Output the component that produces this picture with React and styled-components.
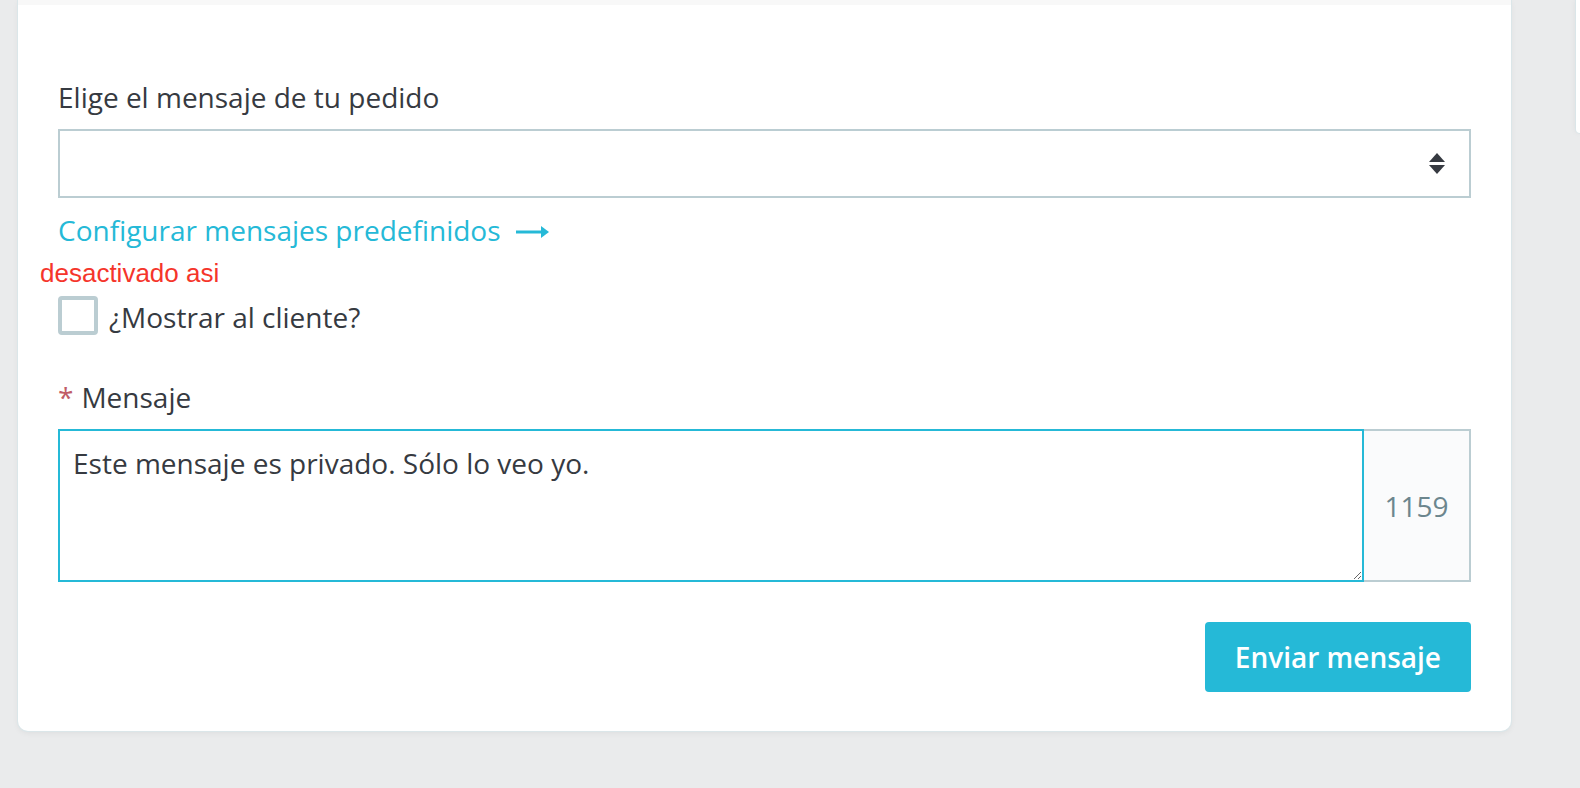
import styled, { createGlobalStyle } from "styled-components";

// page reset
const GlobalStyle = createGlobalStyle`
  html, body {
    margin: 0;
    padding: 0;
    background: #eaebec;
    font-family: "Open Sans", "Noto Sans", sans-serif;
    color: #363a41;
  }
`;

//-Page
const Page = styled.div`
  display: flex;
  align-items: flex-start;
  padding-left: 18px;
  min-height: 788px;
  box-sizing: border-box;
`;

//--Card
const Card = styled.div`
  width: 1493px;
  flex-shrink: 0;
  background: #fff;
  border-radius: 0 0 10px 10px;
  box-shadow: 0 0 0 1px #dbe6e9, 0 2px 6px rgba(0, 0, 0, 0.06);
  overflow: hidden;
`;

const HeaderEdge = styled.div`
  height: 5px;
  background: #f8f8f8;
`;

const CardBody = styled.div`
  padding: 71px 40px 39px;
`;

//--side panel peeking on the right
const SidePanel = styled.div`
  margin-left: 65px;
  flex: 1;
  height: 133px;
  background: #fff;
  border-bottom-left-radius: 10px;
  box-shadow: 0 0 0 1px #dbe6e9, 0 0 6px rgba(0, 0, 0, 0.08);
`;

//---labels
const Label = styled.div`
  font-size: 28px;
  line-height: 42px;
  color: #363a41;
`;

const Required = styled.span`
  color: #c05c67;
  margin-right: 8px;
`;

//---select
const SelectBox = styled.div`
  margin-top: 11px;
  height: 69px;
  box-sizing: border-box;
  border: 2px solid #bbcdd2;
  display: flex;
  align-items: center;
  justify-content: flex-end;
  padding-right: 24px;
`;

//---link
const Link = styled.a`
  display: inline-flex;
  align-items: center;
  margin-top: 11px;
  font-size: 28px;
  line-height: 42px;
  color: #25b9d7;
  text-decoration: none;
  cursor: pointer;
`;

const ArrowIcon = styled.svg`
  margin-left: 15px;
  margin-top: 3px;
`;

//---note
const Note = styled.div`
  margin: 7px 0 0 -18px;
  font-family: "Liberation Sans", Arial, sans-serif;
  font-size: 26px;
  line-height: 30px;
  color: #f5352b;
`;

//---checkbox
const CheckRow = styled.label`
  display: flex;
  align-items: center;
  gap: 11px;
  margin-top: 6px;
  height: 42px;
  cursor: pointer;
`;

const CheckBox = styled.span`
  width: 40px;
  height: 39px;
  box-sizing: border-box;
  border: 4px solid #bbcdd2;
  border-radius: 4px;
  background: #fff;
`;

const CheckText = styled.span`
  font-size: 28px;
  line-height: 42px;
  padding-top: 3px;
`;

//---message field
const MessageLabel = styled(Label)`
  margin-top: 40px;
`;

const FieldGroup = styled.div`
  display: flex;
  margin-top: 11px;
  height: 153px;
`;

const TextArea = styled.textarea`
  flex: 1;
  box-sizing: border-box;
  border: 2px solid #25b9d7;
  outline: none;
  padding: 11px 13px;
  font-family: "Open Sans", "Noto Sans", sans-serif;
  font-size: 28px;
  line-height: 42px;
  color: #363a41;
  resize: vertical;
  margin: 0;
`;

const Counter = styled.div`
  width: 107px;
  box-sizing: border-box;
  border: 2px solid #bbcdd2;
  border-left: none;
  background: #fafbfc;
  color: #6c868e;
  font-size: 28px;
  display: flex;
  align-items: center;
  justify-content: center;
`;

//---footer
const Footer = styled.div`
  display: flex;
  justify-content: flex-end;
  margin-top: 40px;
`;

const Button = styled.button`
  height: 70px;
  padding: 0 30px;
  border: none;
  border-radius: 4px;
  background: #25b9d7;
  color: #fff;
  font-family: "Open Sans", "Noto Sans", sans-serif;
  font-weight: 600;
  font-size: 28px;
  cursor: pointer;
`;

function SortIcon() {
  return (
    <svg width="16" height="21" viewBox="0 0 16 21">
      <polygon points="0,9 8,0 16,9" fill="#363a41" />
      <polygon points="0,12 16,12 8,21" fill="#363a41" />
    </svg>
  );
}

function App() {
  return (
    <>
      <GlobalStyle />
      <Page>
        <Card>
          <HeaderEdge />
          <CardBody>
            <Label>Elige el mensaje de tu pedido</Label>
            <SelectBox>
              <SortIcon />
            </SelectBox>
            <Link>
              Configurar mensajes predefinidos
              <ArrowIcon width="33" height="12" viewBox="0 0 33 12">
                <path d="M0 6h28" stroke="#25b9d7" strokeWidth="3" />
                <polygon points="25,0 33,6 25,12" fill="#25b9d7" />
              </ArrowIcon>
            </Link>
            <Note>desactivado asi</Note>
            <CheckRow>
              <CheckBox />
              <CheckText>¿Mostrar al cliente?</CheckText>
            </CheckRow>
            <MessageLabel>
              <Required>*</Required>Mensaje
            </MessageLabel>
            <FieldGroup>
              <TextArea defaultValue="Este mensaje es privado. Sólo lo veo yo." />
              <Counter>1159</Counter>
            </FieldGroup>
            <Footer>
              <Button>Enviar mensaje</Button>
            </Footer>
          </CardBody>
        </Card>
        <SidePanel />
      </Page>
    </>
  );
}

export default App;
